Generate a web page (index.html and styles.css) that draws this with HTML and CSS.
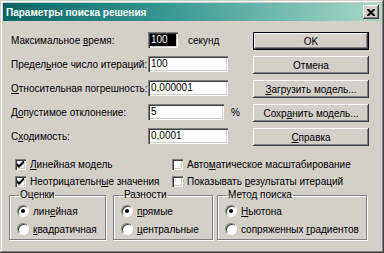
FILE: index.html
```html
<!DOCTYPE html>
<html lang="ru">
<head>
  <meta charset="UTF-8">
  <title>Параметры поиска решения</title>
  <link rel="stylesheet" href="styles.css">
</head>
<body>
  <div class="window">
    <!-- Title bar -->
    <div class="titlebar">
      <span class="title">Параметры поиска решения</span>
      <span class="close-btn">
        <svg width="8" height="7" viewBox="0 0 8 7"><path d="M0 0h2l2 2 2-2h2v1l-2.5 2.5L8 6v1H6L4 5 2 7H0V6l2.5-2.5L0 1z" fill="#000"/></svg>
      </span>
    </div>

    <div class="content">
      <div class="top">
        <!-- Parameters -->
        <div class="fields">
          <div class="field-row">
            <label class="field-label">Максимальное <u>в</u>ремя:</label>
            <span class="input short selected"><span class="sel">100</span></span>
            <span class="unit">секунд</span>
          </div>
          <div class="field-row">
            <label class="field-label">Предел<u>ь</u>ное число итераций:</label>
            <span class="input">100</span>
          </div>
          <div class="field-row">
            <label class="field-label"><u>О</u>тносительная погрешность:</label>
            <span class="input">0,000001</span>
          </div>
          <div class="field-row">
            <label class="field-label">Д<u>о</u>пустимое отклонение:</label>
            <span class="input mid">5</span>
            <span class="unit pct">%</span>
          </div>
          <div class="field-row">
            <label class="field-label">С<u>х</u>одимость:</label>
            <span class="input">0,0001</span>
          </div>
        </div>

        <!-- Buttons -->
        <div class="buttons">
          <button class="btn default">OK</button>
          <button class="btn">Отмена</button>
          <button class="btn"><u>З</u>агрузить модель...</button>
          <button class="btn">Сохр<u>а</u>нить модель...</button>
          <button class="btn"><u>С</u>правка</button>
        </div>
      </div>

      <!-- Checkboxes -->
      <div class="checks">
        <div class="check-row"><span class="checkbox"><svg width="7" height="7" viewBox="0 0 7 7"><path d="M0 2v3l2 2 5-5V-1L2 4z" fill="#000"/></svg></span><span><u>Л</u>инейная модель</span></div>
        <div class="check-row"><span class="checkbox"></span><span>Авто<u>м</u>атическое масштабирование</span></div>
        <div class="check-row"><span class="checkbox"><svg width="7" height="7" viewBox="0 0 7 7"><path d="M0 2v3l2 2 5-5V-1L2 4z" fill="#000"/></svg></span><span>Неотрицательн<u>ы</u>е значения</span></div>
        <div class="check-row"><span class="checkbox"></span><span>Показывать <u>р</u>езультаты итераций</span></div>
      </div>

      <!-- Option groups -->
      <div class="groups">
        <fieldset class="group g-est">
          <legend>Оценки</legend>
          <div class="radio-row"><span class="radio on"></span><span>лин<u>е</u>йная</span></div>
          <div class="radio-row"><span class="radio"></span><span><u>к</u>вадратичная</span></div>
        </fieldset>
        <fieldset class="group g-diff">
          <legend>Разности</legend>
          <div class="radio-row"><span class="radio on"></span><span><u>п</u>рямые</span></div>
          <div class="radio-row"><span class="radio"></span><span><u>ц</u>ентральные</span></div>
        </fieldset>
        <fieldset class="group g-method">
          <legend>Метод поиска</legend>
          <div class="radio-row"><span class="radio on"></span><span><u>Н</u>ьютона</span></div>
          <div class="radio-row"><span class="radio"></span><span>сопряженных <u>г</u>радиентов</span></div>
        </fieldset>
      </div>
    </div>
  </div>
</body>
</html>
```

FILE: styles.css
```css
/* General */
* {
  margin: 0;
  padding: 0;
  box-sizing: border-box;
}

body {
  font-family: 'Liberation Sans', Arial, sans-serif;
  font-size: 10px;
  color: #000;
  background: #d4d0c8;
}

u {
  text-decoration: underline;
  text-underline-offset: 1px;
}

/* Window frame */
.window {
  width: 384px;
  height: 253px;
  padding: 3px;
  background: #d4d0c8;
  box-shadow: inset -1px -1px #404040, inset 1px 1px #d4d0c8,
              inset -2px -2px #808080, inset 2px 2px #fff;
}

.titlebar {
  height: 18px;
  display: flex;
  align-items: center;
  justify-content: space-between;
  padding: 0 2px 0 3px;
  background: linear-gradient(to right, #086466, #3a9a94 45%, #a8d8c8);
}

.title {
  color: #fff;
  font-weight: bold;
  font-size: 10px;
}

.close-btn {
  width: 16px;
  height: 14px;
  display: flex;
  align-items: center;
  justify-content: center;
  background: #d4d0c8;
  box-shadow: inset -1px -1px #404040, inset 1px 1px #fff,
              inset -2px -2px #808080;
}

/* Content */
.content {
  padding-top: 11px;
}

.top {
  display: flex;
}

.fields {
  width: 250px;
  padding-left: 8px;
  display: flex;
  flex-direction: column;
  gap: 8px;
}

.field-row {
  height: 16px;
  display: flex;
  align-items: center;
}

.field-label {
  width: 137px;
  white-space: nowrap;
}

.input {
  width: 80px;
  height: 16px;
  line-height: 16px;
  padding-left: 3px;
  background: #fff;
  box-shadow: inset 1px 1px #808080, inset 2px 2px #404040,
              inset -1px -1px #fff, inset -2px -2px #d4d0c8;
}

.input.short {
  width: 30px;
}

.input.mid {
  width: 76px;
}

.input.selected {
  padding: 2px;
  line-height: 12px;
}

.sel {
  display: block;
  height: 12px;
  background: #000;
  color: #fff;
  padding-left: 1px;
}

.unit {
  margin-left: 10px;
}

.unit.pct {
  margin-left: 7px;
}

.buttons {
  width: 116px;
  display: flex;
  flex-direction: column;
  gap: 6px;
}

.btn {
  height: 18px;
  font: inherit;
  color: #000;
  background: #d4d0c8;
  border: none;
  box-shadow: inset -1px -1px #404040, inset 1px 1px #fff,
              inset -2px -2px #808080;
}

.btn.default {
  border: 1px solid #000;
}

/* Checkboxes */
.checks {
  margin-top: 10px;
  padding-left: 12px;
  display: grid;
  grid-template-columns: 157px auto;
}

.check-row {
  height: 17px;
  display: flex;
  align-items: center;
  gap: 4px;
  white-space: nowrap;
}

.checkbox {
  width: 11px;
  height: 11px;
  flex: none;
  display: flex;
  align-items: center;
  justify-content: center;
  background: #fff;
  box-shadow: inset 1px 1px #808080, inset 2px 2px #404040,
              inset -1px -1px #fff, inset -2px -2px #d4d0c8;
}

/* Group boxes */
.groups {
  display: flex;
  padding-left: 6px;
}

.group {
  height: 50px;
  border: 1px solid #808080;
  box-shadow: 1px 1px 0 #fff, inset 1px 1px 0 #fff;
  padding: 2px 0 0 7px;
}

.group legend {
  padding: 0 1px;
  margin-left: 2px;
  line-height: 10px;
}

.g-est {
  width: 97px;
  margin-right: 7px;
}

.g-diff {
  width: 100px;
  margin-right: 4px;
}

.g-method {
  width: 150px;
}

.radio-row {
  height: 18px;
  display: flex;
  align-items: center;
  gap: 4px;
  white-space: nowrap;
}

.radio {
  width: 12px;
  height: 12px;
  flex: none;
  border-radius: 50%;
  display: flex;
  align-items: center;
  justify-content: center;
  background: #fff;
  border: 1px solid;
  border-color: #808080 #fff #fff #808080;
  box-shadow: inset 1px 1px #404040;
}

.radio.on::after {
  content: '';
  width: 4px;
  height: 4px;
  border-radius: 50%;
  background: #000;
}
```
